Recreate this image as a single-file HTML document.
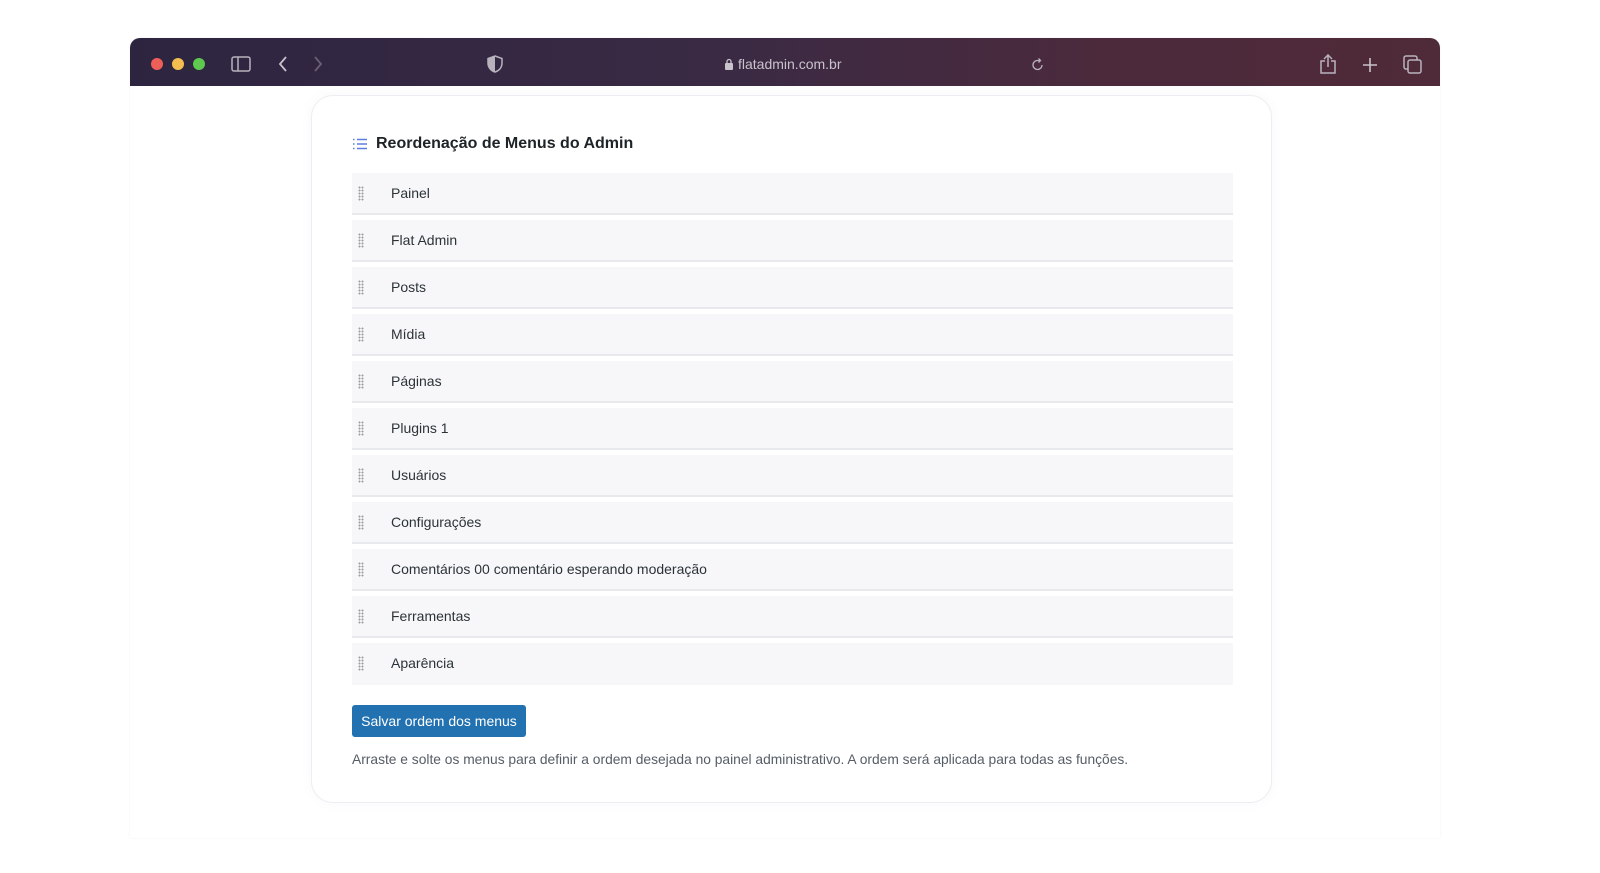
<!DOCTYPE html>
<html><head><meta charset="utf-8"><style>
*{box-sizing:border-box;margin:0;padding:0}
body{width:1600px;height:873px;background:#fff;font-family:"Liberation Sans",sans-serif;position:relative;overflow:hidden}
.win{position:absolute;left:130px;top:38px;width:1310px;height:800px;background:#fff;border-radius:10px 10px 0 0;overflow:hidden;box-shadow:0 0 2px rgba(0,0,0,.06)}
.bar{height:48px;background:linear-gradient(90deg,#2d2540 0%,#3a2a44 45%,#4c2a3c 75%,#4f2a38 100%);position:relative}
.dot{position:absolute;top:20px;width:12px;height:12px;border-radius:50%}
.url{position:absolute;left:608px;top:18px;color:#c9c3cc;font-size:14px}
.card{position:absolute;left:311px;top:95px;width:961px;height:708px;border:1px solid #eceef3;border-radius:22px;background:#fff;box-shadow:0 0 14px rgba(0,0,0,.03)}
h2{position:absolute;left:64px;top:39px;font-size:16px;font-weight:bold;color:#1d2327}
.hicon{position:absolute;left:40px;top:42px}
.list{position:absolute;left:40px;top:77px;width:881px}
.row{height:42px;background:#f7f7f9;border-bottom:2px solid #e8e9ec;margin-bottom:5px;position:relative;font-size:14px;color:#2c3338;line-height:40px;padding-left:39px}
.grip{position:absolute;left:6px;top:13px;width:6px;height:15px;background-image:radial-gradient(circle,#9a9ca0 0.9px,transparent 1.1px);background-size:3px 3px}
.btn{position:absolute;left:40px;top:609px;width:174px;height:32px;background:#2271b1;border-radius:3px;color:#fff;font-size:14px;line-height:32px;text-align:center}
.help{position:absolute;left:40px;top:656px;font-size:13.8px;color:#555d66}
</style></head><body>
<div class="win">
<div class="bar">
<div class="dot" style="left:21px;background:#ee5f57"></div>
<div class="dot" style="left:42px;background:#f5bd4f"></div>
<div class="dot" style="left:63px;background:#5ec84f"></div>
<svg style="position:absolute;left:101px;top:18px" width="20" height="16" viewBox="0 0 20 16" fill="none" stroke="#b8b2bd" stroke-width="1.5"><rect x="1" y="1" width="18" height="14" rx="2"/><line x1="7" y1="1" x2="7" y2="15"/></svg>
<svg style="position:absolute;left:148px;top:18px" width="10" height="16" fill="none" stroke="#c8c2cc" stroke-width="1.8"><path d="M8 1 L2 8 L8 15"/></svg>
<svg style="position:absolute;left:183px;top:18px" width="10" height="16" fill="none" stroke="#6b5f70" stroke-width="1.8"><path d="M2 1 L8 8 L2 15"/></svg>
<svg style="position:absolute;left:357px;top:17px" width="16" height="18" viewBox="0 0 16 18"><path d="M8 1 L15 3.5 V8 C15 13 11.5 16 8 17 C4.5 16 1 13 1 8 V3.5Z" fill="none" stroke="#b8b2bd" stroke-width="1.5"/><path d="M8 1 V17 C4.5 16 1 13 1 8 V3.5Z" fill="#b8b2bd"/></svg>
<svg style="position:absolute;left:594px;top:20px" width="10" height="13" viewBox="0 0 10 13"><rect x="1" y="5" width="8" height="7" rx="1" fill="#c9c3cc"/><path d="M3 5 V3.5 a2 2 0 0 1 4 0 V5" fill="none" stroke="#c9c3cc" stroke-width="1.3"/></svg>
<div class="url">flatadmin.com.br</div>
<svg style="position:absolute;left:902px;top:20px" width="12" height="13" viewBox="0 0 12 13" fill="none" stroke="#b8b2bd" stroke-width="1.3"><path d="M10 7 A4.5 4.5 0 1 1 6 2.5 L8 2.5"/><path d="M6.5 0.5 L8.5 2.5 L6.5 4.5"/></svg>
<svg style="position:absolute;left:1189px;top:16px" width="18" height="20" viewBox="0 0 18 20" fill="none" stroke="#b8b2bd" stroke-width="1.5"><path d="M6 7 H2 V19 H16 V7 H12"/><path d="M9 13 V1 M5 5 L9 1 L13 5"/></svg>
<svg style="position:absolute;left:1232px;top:19px" width="16" height="16" stroke="#c8c2cc" stroke-width="1.6"><path d="M8 1 V15 M1 8 H15"/></svg>
<svg style="position:absolute;left:1273px;top:17px" width="19" height="19" viewBox="0 0 19 19" fill="none" stroke="#b8b2bd" stroke-width="1.5"><rect x="5" y="5" width="13" height="13" rx="2"/><path d="M14 5 V3 a2 2 0 0 0 -2 -2 H3 a2 2 0 0 0 -2 2 V12 a2 2 0 0 0 2 2 H5"/></svg>
</div>
</div>
<div class="card">
<svg class="hicon" width="16" height="12" viewBox="0 0 16 12" stroke="#5b7fe0" stroke-width="1.4"><path d="M5 1.5H15M5 6H15M5 10.5H15"/><path d="M1 1.5H2.5M1 6H2.5M1 10.5H2.5"/></svg>
<h2>Reordenação de Menus do Admin</h2>
<div class="list">
<div class="row"><span class="grip"></span>Painel</div>
<div class="row"><span class="grip"></span>Flat Admin</div>
<div class="row"><span class="grip"></span>Posts</div>
<div class="row"><span class="grip"></span>Mídia</div>
<div class="row"><span class="grip"></span>Páginas</div>
<div class="row"><span class="grip"></span>Plugins 1</div>
<div class="row"><span class="grip"></span>Usuários</div>
<div class="row"><span class="grip"></span>Configurações</div>
<div class="row"><span class="grip"></span>Comentários 00 comentário esperando moderação</div>
<div class="row"><span class="grip"></span>Ferramentas</div>
<div class="row" style="border-bottom:none"><span class="grip"></span>Aparência</div>
</div>
<div class="btn">Salvar ordem dos menus</div>
<div class="help">Arraste e solte os menus para definir a ordem desejada no painel administrativo. A ordem será aplicada para todas as funções.</div>
</div>
</body></html>
